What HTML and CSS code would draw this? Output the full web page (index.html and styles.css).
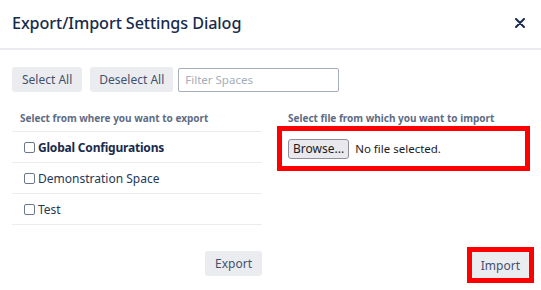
FILE: index.html
```html
<!DOCTYPE html>
<html lang="en">
<head>
  <meta charset="UTF-8">
  <meta name="viewport" content="width=device-width, initial-scale=1.0">
  <title>Export/Import Settings Dialog</title>
  <link rel="stylesheet" href="styles.css">
</head>
<body>
  <div class="dialog">
    <div class="dialog-header">
      <h2>Export/Import Settings Dialog</h2>
      <button class="close" aria-label="Close">
        <svg width="10" height="10" viewBox="0 0 10 10"><path d="M1 1L9 9M9 1L1 9" stroke="#172b4d" stroke-width="2" stroke-linecap="round"/></svg>
      </button>
    </div>

    <div class="toolbar">
      <button class="btn">Select All</button>
      <button class="btn">Deselect All</button>
      <input class="filter" type="text" placeholder="Filter Spaces">
    </div>

    <div class="columns">
      <div class="col col-export">
        <div class="col-title">Select from where you want to export</div>
        <ul class="space-list">
          <li class="bold"><span class="check"></span>Global Configurations</li>
          <li><span class="check"></span>Demonstration Space</li>
          <li><span class="check"></span>Test</li>
        </ul>
        <div class="actions">
          <button class="btn">Export</button>
        </div>
      </div>

      <div class="col col-import">
        <div class="col-title">Select file from which you want to import</div>
        <div class="highlight file-box">
          <button class="browse">Browse...</button>
          <span class="file-name">No file selected.</span>
        </div>
        <div class="actions">
          <span class="highlight import-box"><button class="btn">Import</button></span>
        </div>
      </div>
    </div>
  </div>
</body>
</html>
```

FILE: styles.css
```css
/* Base */
* { box-sizing: border-box; margin: 0; padding: 0; }
body { font-family: 'Noto Sans', 'Open Sans', sans-serif; background: #fff; color: #172b4d; width: 541px; height: 290px; overflow: hidden; }
.dialog { height: 290px; display: flex; flex-direction: column; }

/* Header */
.dialog-header { height: 50px; flex: none; display: flex; align-items: center; justify-content: space-between; padding: 0 15px 2px 12px; border-bottom: 2px solid #ebecf0; }
.dialog-header h2 { font-size: 16.2px; font-weight: 500; color: #172b4d; letter-spacing: -0.1px; }
.close { background: none; border: none; width: 12px; height: 12px; display: flex; align-items: center; justify-content: center; cursor: pointer; }

/* Toolbar */
.toolbar { display: flex; align-items: center; padding: 17px 12px 0; height: 42px; flex: none; }
.btn { background: #ebecf0; border: none; border-radius: 3px; height: 25px; padding: 0 10px; font-family: inherit; font-size: 12px; color: #42526e; cursor: pointer; }
.toolbar .btn { margin-right: 8px; }
.toolbar .btn + .btn { margin-right: 5px; padding: 0 9px; }
.filter { width: 161px; height: 24px; border: 1px solid #a5adba; border-radius: 2px; padding: 0 6px; font-family: inherit; font-size: 11.5px; }
.filter::placeholder { color: #a5adba; }

/* Columns */
.columns { display: flex; flex: 1; padding: 0 11px 0 12px; }
.col { display: flex; flex-direction: column; }
.col-export { width: 250px; }
.col-import { margin-left: 15px; flex: 1; }
.col-title { font-size: 10px; font-weight: 700; color: #5e6c84; padding: 19px 0 0 8px; height: 39px; }
.col-import .col-title { padding-left: 11px; height: 34px; }

/* Space list */
.space-list { list-style: none; border-top: 1px solid #ebecf0; }
.space-list li { height: 31px; display: flex; align-items: center; padding-left: 12px; font-size: 12px; color: #253858; border-bottom: 1px solid #ebecf0; }
.space-list li.bold { font-weight: 700; color: #172b4d; letter-spacing: -0.2px; }
.check { width: 11px; height: 11px; border: 1.5px solid #6b778c; border-radius: 2px; margin-right: 3px; flex: none; }

/* File picker */
.highlight { border: 5px solid #ff0000; }
.file-box { height: 45px; display: flex; align-items: center; padding-left: 6px; }
.browse { height: 20px; padding: 0 4px; background: #e9e9ed; border: 1px solid #8f8f9d; border-radius: 3px; font-family: inherit; font-size: 12px; color: #1b1b1b; }
.file-name { margin-left: 6px; font-size: 11.5px; color: #1b1b1b; }

/* Footer actions */
.actions { display: flex; justify-content: flex-end; margin-top: auto; }
.col-export .actions { padding-bottom: 14px; }
.col-import .actions { padding-bottom: 7px; margin-right: -4px; }
.import-box { display: inline-flex; }
.import-box .btn { height: 26px; padding: 0 9px; }
```
